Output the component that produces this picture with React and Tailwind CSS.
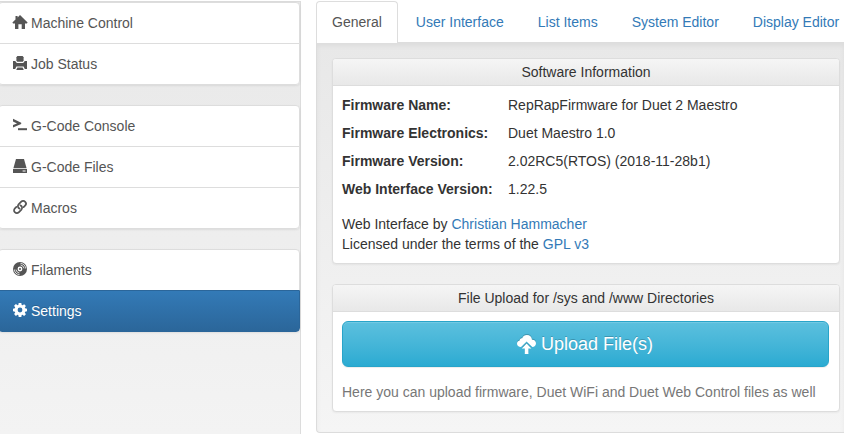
import React from "react";

const icons = {
  home: (
    <path d="M7 0 L14.6 7.6 L13.9 8.4 H12 V14 H8.7 V9.2 H5.4 V14 H2 V8.4 H0.1 L-0.6 7.6 L2.5 4.5 V1 H4.6 V2.4 Z" />
  ),
  print: (
    <>
      <path d="M4.4 0 H9.6 L10.6 1.2 V4.6 L9.8 5.8 H4.2 L3.4 4.6 V1.2 Z" />
      <path d="M0 5 H2.2 L3.8 7 H10.2 L11.8 5 H14 V13 H11.8 L10.6 10.4 H3.4 L2.2 13 H0 Z" />
      <path d="M4.4 11.6 H9.6 L10.8 14 H3.2 Z" />
    </>
  ),
  console: (
    <>
      <path d="M0 0.8 L8.2 4.7 V6 L0 9.6 V7.1 L4 5.4 L0 3.4 Z" />
      <path d="M5 10.2 H14 V12.2 H5 Z" />
    </>
  ),
  drive: (
    <>
      <path d="M3 0 H11 L13.6 9.2 H0.4 Z" />
      <path fillRule="evenodd" d="M0 10 H14 V14 H0 Z M9.6 11.4 V12.6 H12.6 V11.4 Z" />
    </>
  ),
  link: (
    <g fill="none" stroke="currentColor" strokeWidth="1.7" strokeLinecap="round">
      <path d="M6.6 8.6 C4.8 7.8 4.3 5.9 5.6 4.4 L8 1.9 C9.3 0.6 11.1 0.7 12.2 1.8 C13.3 2.9 13.2 4.6 12.1 5.7 L10.6 7.2" />
      <path d="M7.4 5.4 C9.2 6.2 9.7 8.1 8.4 9.6 L6 12.1 C4.7 13.4 2.9 13.3 1.8 12.2 C0.7 11.1 0.8 9.4 1.9 8.3 L3.4 6.8" />
    </g>
  ),
  disc: (
    <>
      <path fillRule="evenodd" d="M7 0 A7 7 0 1 1 7 14 A7 7 0 1 1 7 0 Z M7 4.6 A2.4 2.4 0 1 0 7 9.4 A2.4 2.4 0 1 0 7 4.6 Z" />
      <circle cx="7" cy="7" r="1" />
      <g fill="none" stroke="#fff" strokeWidth="0.8">
        <path d="M7.5 1.4 A5.6 5.6 0 0 1 12.6 6.5 M7.6 3 A4 4 0 0 1 11 6.4" />
        <path d="M6.5 12.6 A5.6 5.6 0 0 1 1.4 7.5 M6.4 11 A4 4 0 0 1 3 7.6" />
      </g>
    </>
  ),
  cog: (
    <path fillRule="evenodd" d="M5.7 0 H8.3 L8.7 1.9 L9.6 2.3 L11.2 1.2 L12.9 2.9 L11.8 4.5 L12.1 5.3 L14 5.7 V8.3 L12.1 8.7 L11.8 9.6 L12.9 11.2 L11.1 12.9 L9.5 11.8 L8.7 12.1 L8.3 14 H5.7 L5.3 12.1 L4.4 11.8 L2.9 12.9 L1.1 11.1 L2.2 9.5 L1.9 8.7 L0 8.3 V5.7 L1.9 5.3 L2.2 4.4 L1.1 2.8 L2.9 1.1 L4.5 2.2 L5.3 1.9 Z M7 4.6 A2.4 2.4 0 1 0 7 9.4 A2.4 2.4 0 1 0 7 4.6 Z" />
  ),
};

const groups = [
  [["home", "Machine Control"], ["print", "Job Status"]],
  [["console", "G-Code Console"], ["drive", "G-Code Files"], ["link", "Macros"]],
  [["disc", "Filaments"], ["cog", "Settings"]],
];

const info = [
  ["Firmware Name:", "RepRapFirmware for Duet 2 Maestro"],
  ["Firmware Electronics:", "Duet Maestro 1.0"],
  ["Firmware Version:", "2.02RC5(RTOS) (2018-11-28b1)"],
  ["Web Interface Version:", "1.22.5"],
];

function NavItem({ icon, label }) {
  const active = label === "Settings";
  return (
    <a
      className={
        active
          ? "-mt-px flex h-[42px] items-center rounded-b border border-[#2b669a] bg-linear-to-b from-[#337ab7] to-[#2b669a] pl-3.5 text-white [text-shadow:0_-1px_0_#286090]"
          : "-mt-px flex h-[42px] items-center border border-[#ddd] bg-white pl-3.5 text-[#555] first:mt-0 first:rounded-t last:rounded-b"
      }
    >
      <svg className="mr-1 mb-0.5 size-3.5 shrink-0 overflow-visible" viewBox="0 0 14 14" fill="currentColor">
        {icons[icon]}
      </svg>
      <span>{label}</span>
    </a>
  );
}

function Panel({ title, className, children }) {
  return (
    <section className={`rounded border border-[#ddd] bg-white shadow-[0_1px_2px_rgba(0,0,0,0.05)] ${className}`}>
      <h2 className="h-[27px] rounded-t-[3px] border-b border-[#ddd] bg-linear-to-b from-[#f5f5f5] to-[#e8e8e8] pt-[3px] text-center">
        {title}
      </h2>
      {children}
    </section>
  );
}

export default function App() {
  return (
    <div className="flex h-[434px] w-[844px] overflow-hidden bg-white font-['Liberation_Sans',Arial,sans-serif] text-[14px] leading-5 text-[#333]">
      <aside className="mt-px h-[433px] w-[301px] shrink-0 border-t border-r border-[#dcdcdc] bg-linear-to-b from-[#e8e8e8] to-[#f3f3f3]">
        {groups.map((items, i) => (
          <nav key={i} className="-ml-0.5 mb-5 rounded shadow-[0_1px_2px_rgba(0,0,0,0.075)]">
            {items.map(([icon, label]) => (
              <NavItem key={label} icon={icon} label={label} />
            ))}
          </nav>
        ))}
      </aside>

      <main className="ml-[15px] w-[528px] shrink-0 pt-px">
        <div className="flex h-[42px] border-b border-[#ddd] text-[#337ab7]">
          <a className="mr-0.5 h-[42px] rounded-t border border-b-0 border-[#ddd] bg-white px-[15px] pt-[10px] text-[#555]">General</a>
          {["User Interface", "List Items", "System Editor", "Display Editor"].map((tab) => (
            <a key={tab} className="mr-0.5 px-4 pt-[11px] whitespace-nowrap">{tab}</a>
          ))}
        </div>

        <div className="h-[390px] rounded-bl border-b border-l border-[#dcdcdc] bg-linear-to-b from-[#e8e8e8] to-[#f5f5f5] pt-[15px] pl-[15px] shadow-[inset_0_3px_5px_rgba(0,0,0,0.05)]">
          <Panel title="Software Information" className="h-[206px] w-[508px]">
            <dl className="grid grid-cols-[166px_1fr] gap-y-2 px-[9px] pt-[9px]">
              {info.map(([name, value]) => (
                <React.Fragment key={name}>
                  <dt className="font-bold">{name}</dt>
                  <dd>{value}</dd>
                </React.Fragment>
              ))}
            </dl>
            <p className="px-[9px] pt-[15px]">
              Web Interface by <a className="text-[#337ab7]">Christian Hammacher</a>
              <br />
              Licensed under the terms of the <a className="text-[#337ab7]">GPL v3</a>
            </p>
          </Panel>

          <Panel title="File Upload for /sys and /www Directories" className="mt-5 h-[128px] w-[508px]">
            <div className="pt-[9px] pr-2.5 pl-[9px]">
              <button className="flex h-[46px] w-full items-center justify-center rounded-md border border-[#28a4c9] bg-linear-to-b from-[#5bc0de] to-[#2aabd2] pr-px text-[18px] text-white shadow-[inset_0_1px_0_rgba(255,255,255,0.15),0_1px_1px_rgba(0,0,0,0.075)] [text-shadow:0_-1px_0_rgba(0,0,0,0.2)]">
                <svg className="mr-[5px] h-[19px] w-[19px] drop-shadow-[0_-1px_0_rgba(0,0,0,0.2)]" viewBox="0 0 19 19" fill="currentColor">
                  <path d="M4 12 C1.6 12 0 10.6 0 8.7 C0 7 1.1 5.8 2.7 5.5 C2.6 4 3.8 2.9 5.2 3.2 C6.1 1.1 7.8 0 9.9 0 C12.7 0 14.8 2 15 4.7 C17.4 4.5 19 6.1 19 8.2 C19 10.5 17.4 12 15.4 12 L9.6 6.6 Z" />
                  <path d="M9.6 8.6 L14.4 13.6 H11.4 V19 H7.8 V13.6 H4.8 Z" />
                </svg>
                <span>Upload File(s)</span>
              </button>
              <p className="mt-[15px] text-[#777]">Here you can upload firmware, Duet WiFi and Duet Web Control files as well</p>
            </div>
          </Panel>
        </div>
      </main>
    </div>
  );
}
